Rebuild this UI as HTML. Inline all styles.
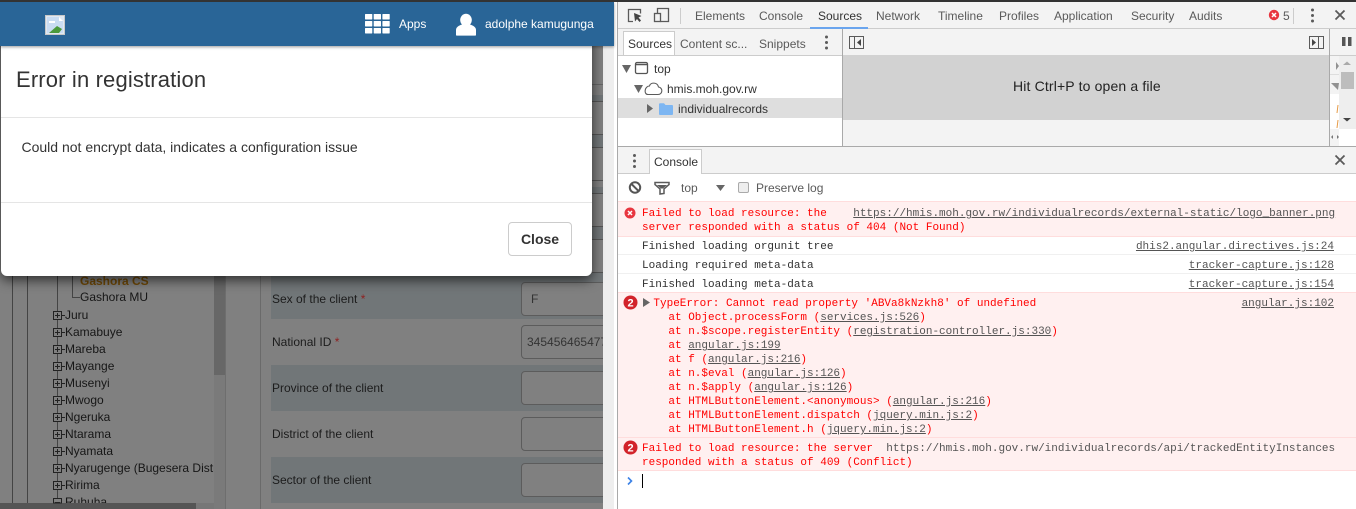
<!DOCTYPE html>
<html><head><meta charset="utf-8"><title>Error in registration</title>
<style>
html,body{margin:0;padding:0;width:1356px;height:509px;overflow:hidden;background:#fff}
body{position:relative;font-family:"Liberation Sans",sans-serif;font-size:12px}
.b{position:absolute}
.t{position:absolute;white-space:pre;line-height:14px;font-size:12px}
.tab{color:#5a5a5a}
.tr{color:#161616;line-height:14px}
.lb{color:#1c1c1c;font-size:12px}
.inp{position:absolute;left:521px;width:90px;background:#808080;border:1px solid #5c5c5c;border-radius:4px;box-sizing:border-box}
.m{position:absolute;white-space:pre;font-family:"Liberation Mono",monospace;font-size:11px;line-height:14px;left:642px}
.r{color:#f00}.g{color:#303030}
.m u,.lk{color:#545454;text-decoration:underline}
.lk{position:absolute;right:22px;font-family:"Liberation Mono",monospace;font-size:11px;line-height:14px;white-space:pre}
</style></head><body>
<!-- dim page -->
<div class="b" style="left:0;top:0;width:603px;height:509px;background:#808080"></div>
<div class="b" style="left:603px;top:0;width:11px;height:509px;background:#eeeeee"></div>
<div class="b" style="left:271px;top:95px;width:332px;height:6px;background:#717678"></div>
<div class="b" style="left:271px;top:134px;width:332px;height:13px;background:#717678"></div>
<div class="b" style="left:271px;top:187px;width:332px;height:6px;background:#717678"></div>
<div class="b" style="left:271px;top:226px;width:332px;height:13px;background:#717678"></div>
<div class="b" style="left:271px;top:273px;width:332px;height:46px;background:#717678"></div>
<div class="b" style="left:271px;top:365px;width:332px;height:46px;background:#717678"></div>
<div class="b" style="left:271px;top:457px;width:332px;height:46px;background:#717678"></div>
<div class="b" style="left:592px;top:84px;width:11px;height:1px;background:#666"></div>
<div class="b" style="left:592px;top:101px;width:11px;height:1px;background:#555"></div>
<div class="b" style="left:592px;top:134px;width:11px;height:1px;background:#555"></div>
<div class="b" style="left:592px;top:147px;width:11px;height:1px;background:#555"></div>
<div class="b" style="left:592px;top:180px;width:11px;height:1px;background:#555"></div>
<div class="b" style="left:592px;top:193px;width:11px;height:1px;background:#555"></div>
<div class="b" style="left:592px;top:226px;width:11px;height:1px;background:#555"></div>
<div class="b" style="left:592px;top:239px;width:11px;height:1px;background:#555"></div>
<div class="b" style="left:592px;top:272px;width:11px;height:1px;background:#555"></div>
<div class="b" style="left:260px;top:270px;width:1px;height:239px;background:#6a6a6a"></div>
<div class="b" style="left:214px;top:270px;width:11px;height:239px;background:#7a7a7a"></div>
<div class="b" style="left:214px;top:270px;width:11px;height:105px;background:#676767"></div>
<div class="b" style="left:225px;top:270px;width:1px;height:239px;background:#6e6e6e"></div>
<div class="b" style="left:12px;top:270px;width:1px;height:233px;background:#444"></div>
<div class="b" style="left:27px;top:270px;width:1px;height:233px;background:#444"></div>
<div class="b" style="left:57px;top:270px;width:1px;height:233px;background:#444"></div>
<div class="b" style="left:72px;top:270px;width:1px;height:27px;background:#444"></div>
<div class="b" style="left:72px;top:297px;width:8px;height:1px;background:#444"></div>
<div class="t" style="left:80px;top:274px;color:#6f4806;font-weight:bold">Gashora CS</div>
<div class="t tr" style="left:80px;top:290px">Gashora MU</div>
<div class="t tr" style="left:65px;top:308px">Juru</div>
<div class="t tr" style="left:65px;top:325px">Kamabuye</div>
<div class="t tr" style="left:65px;top:342px">Mareba</div>
<div class="t tr" style="left:65px;top:359px">Mayange</div>
<div class="t tr" style="left:65px;top:376px">Musenyi</div>
<div class="t tr" style="left:65px;top:393px">Mwogo</div>
<div class="t tr" style="left:65px;top:410px">Ngeruka</div>
<div class="t tr" style="left:65px;top:427px">Ntarama</div>
<div class="t tr" style="left:65px;top:444px">Nyamata</div>
<div class="t tr" style="left:65px;top:461px;width:149px;overflow:hidden">Nyarugenge (Bugesera District)</div>
<div class="t tr" style="left:65px;top:478px">Ririma</div>
<div class="t tr" style="left:65px;top:495px">Ruhuha</div>
<div class="b" style="left:0;top:503px;width:196px;height:6px;background:#555"></div>
<div class="b" style="left:196px;top:503px;width:18px;height:6px;background:#777"></div>
<div class="t lb" style="left:272px;top:292px">Sex of the client <span style="color:#8f1f1f">*</span></div>
<div class="t lb" style="left:272px;top:335px">National ID <span style="color:#8f1f1f">*</span></div>
<div class="t lb" style="left:272px;top:381px">Province of the client</div>
<div class="t lb" style="left:272px;top:427px">District of the client</div>
<div class="t lb" style="left:272px;top:473px">Sector of the client</div>
<div class="inp" style="top:282px;height:34px"></div>
<div class="inp" style="top:325px;height:34px"></div>
<div class="inp" style="top:371px;height:34px"></div>
<div class="inp" style="top:417px;height:34px"></div>
<div class="inp" style="top:463px;height:34px"></div>
<div class="t" style="left:531px;top:292px;color:#333">F</div>
<div class="t" style="left:527px;top:335px;color:#333">3454564654774</div>
<div class="b" style="left:603px;top:0;width:15px;height:509px;background:linear-gradient(90deg,#eeeeee 0,#eeeeee 11px,#fff 11px,#fff 14px,#a9a9a9 14px)"></div>
<!-- modal -->
<div class="b" style="left:1px;top:30px;width:591px;height:246px;background:#fff;border-radius:6px;box-shadow:0 4px 12px rgba(0,0,0,.65)"></div>
<div class="b" style="left:1px;top:117px;width:591px;height:1px;background:#e5e5e5"></div>
<div class="b" style="left:1px;top:202px;width:591px;height:1px;background:#e5e5e5"></div>
<div class="t" style="left:16px;top:66px;font-size:22px;line-height:28px;color:#333;letter-spacing:.15px">Error in registration</div>
<div class="t" style="left:21.500px;top:139px;font-size:14px;line-height:16px;color:#333">Could not encrypt data, indicates a configuration issue</div>
<div class="b" style="left:508px;top:222px;width:64px;height:34px;box-sizing:border-box;border:1px solid #ccc;border-radius:4px;background:#fff;color:#333;font-weight:bold;font-size:14px;line-height:32px;text-align:center">Close</div>
<!-- header -->
<div class="b" style="left:0;top:2px;width:614px;height:44px;background:#296597;box-shadow:0 1px 3px rgba(0,0,0,.4)"></div>
<div class="t" style="left:399px;top:17px;color:#fff">Apps</div>
<div class="t" style="left:485px;top:17px;color:#fff">adolphe kamugunga</div>
<!-- devtools -->
<div class="b" style="left:617px;top:2px;width:1px;height:507px;background:#a9a9a9"></div>
<div class="b" style="left:618px;top:2px;width:738px;height:26px;background:#f3f3f3"></div>
<div class="b" style="left:618px;top:28px;width:738px;height:1px;background:#ccc"></div>
<div class="b" style="left:810px;top:27px;width:58px;height:2px;background:#6aa5ee"></div>
<div class="b" style="left:618px;top:29px;width:738px;height:26px;background:#f3f3f3"></div>
<div class="b" style="left:618px;top:55px;width:224px;height:1px;background:#ccc"></div>
<div class="b" style="left:623px;top:31px;width:52px;height:24px;box-sizing:border-box;background:#fff;border:1px solid #ccc;border-bottom:0"></div>
<div class="b" style="left:618px;top:56px;width:224px;height:90px;background:#fff"></div>
<div class="b" style="left:618px;top:98px;width:224px;height:20px;background:#dedede"></div>
<div class="b" style="left:842px;top:29px;width:1px;height:117px;background:#a9a9a9"></div>
<div class="b" style="left:843px;top:55px;width:486px;height:65px;background:#d2d2d2"></div>
<div class="b" style="left:843px;top:120px;width:486px;height:26px;background:#f3f3f3"></div>
<div class="b" style="left:1329px;top:29px;width:1px;height:117px;background:#a9a9a9"></div>
<div class="b" style="left:1330px;top:55px;width:26px;height:1px;background:#ccc"></div>
<div class="b" style="left:1330px;top:56px;width:9px;height:38px;background:#f3f3f3"></div>
<div class="b" style="left:1330px;top:74px;width:9px;height:1px;background:#ddd"></div>
<div class="b" style="left:1330px;top:129px;width:9px;height:17px;background:#f3f3f3"></div>
<div class="b" style="left:1339px;top:56px;width:17px;height:73px;background:#eeeeee"></div>
<div class="b" style="left:1341px;top:72px;width:13px;height:17px;background:#bdbdbd"></div>
<div class="b" style="left:618px;top:146px;width:738px;height:1px;background:#a9a9a9"></div>
<div class="b" style="left:618px;top:147px;width:738px;height:26px;background:#f3f3f3"></div>
<div class="b" style="left:618px;top:173px;width:738px;height:1px;background:#ccc"></div>
<div class="b" style="left:649px;top:149px;width:53px;height:25px;box-sizing:border-box;background:#fff;border:1px solid #ccc;border-bottom:0"></div>
<!-- console rows -->
<div class="b" style="left:618px;top:201px;width:738px;height:1px;background:#fdd"></div>
<div class="b" style="left:618px;top:202px;width:738px;height:34px;background:#fff0f0"></div>
<div class="b" style="left:618px;top:236px;width:738px;height:1px;background:#fdd"></div>
<div class="b" style="left:618px;top:254px;width:738px;height:1px;background:#f0f0f0"></div>
<div class="b" style="left:618px;top:273px;width:738px;height:1px;background:#f0f0f0"></div>
<div class="b" style="left:618px;top:292px;width:738px;height:1px;background:#fdd"></div>
<div class="b" style="left:618px;top:293px;width:738px;height:144px;background:#fff0f0"></div>
<div class="b" style="left:618px;top:437px;width:738px;height:1px;background:#fdd"></div>
<div class="b" style="left:618px;top:438px;width:738px;height:32px;background:#fff0f0"></div>
<div class="b" style="left:618px;top:470px;width:738px;height:1px;background:#fdd"></div>
<!-- devtools text -->
<div class="t tab" style="left:695px;top:9px">Elements</div>
<div class="t tab" style="left:759px;top:9px">Console</div>
<div class="t" style="left:818px;top:9px;color:#333">Sources</div>
<div class="t tab" style="left:876px;top:9px">Network</div>
<div class="t tab" style="left:938px;top:9px">Timeline</div>
<div class="t tab" style="left:999px;top:9px">Profiles</div>
<div class="t tab" style="left:1054px;top:9px">Application</div>
<div class="t tab" style="left:1131px;top:9px">Security</div>
<div class="t tab" style="left:1189px;top:9px">Audits</div>
<div class="t tab" style="left:1283px;top:9px">5</div>
<div class="t" style="left:628px;top:37px;color:#333">Sources</div>
<div class="t tab" style="left:680px;top:37px">Content sc...</div>
<div class="t tab" style="left:759px;top:37px">Snippets</div>
<div class="t" style="left:654px;top:62px;color:#333">top</div>
<div class="t" style="left:667px;top:82px;color:#333">hmis.moh.gov.rw</div>
<div class="t" style="left:678px;top:102px;color:#333">individualrecords</div>
<div class="t" style="left:1013px;top:79px;font-size:14px;line-height:15px;color:#222;letter-spacing:.15px">Hit Ctrl+P to open a file</div>
<div class="t" style="left:654px;top:155px;color:#333">Console</div>
<div class="t tab" style="left:681px;top:181px">top</div>
<div class="t tab" style="left:756px;top:181px">Preserve log</div>
<div class="m r" style="top:207px">Failed to load resource: the    <u>https://hmis.moh.gov.rw/individualrecords/external-static/logo_banner.png</u>
server responded with a status of 404 (Not Found)</div>
<div class="m g" style="top:240px">Finished loading orgunit tree</div>
<div class="lk" style="top:240px">dhis2.angular.directives.js:24</div>
<div class="m g" style="top:259px">Loading required meta-data</div>
<div class="lk" style="top:259px">tracker-capture.js:128</div>
<div class="m g" style="top:278px">Finished loading meta-data</div>
<div class="lk" style="top:278px">tracker-capture.js:154</div>
<div class="m r" style="top:297px;left:653.4px">TypeError: Cannot read property 'ABVa8kNzkh8' of undefined</div>
<div class="lk" style="top:297px">angular.js:102</div>
<div class="m r" style="top:311px;left:668.4px">at Object.processForm (<u>services.js:526</u>)
at n.$scope.registerEntity (<u>registration-controller.js:330</u>)
at <u>angular.js:199</u>
at f (<u>angular.js:216</u>)
at n.$eval (<u>angular.js:126</u>)
at n.$apply (<u>angular.js:126</u>)
at HTMLButtonElement.&lt;anonymous&gt; (<u>angular.js:216</u>)
at HTMLButtonElement.dispatch (<u>jquery.min.js:2</u>)
at HTMLButtonElement.h (<u>jquery.min.js:2</u>)</div>
<div class="m r" style="top:442px">Failed to load resource: the server  <span style="color:#545454">https://hmis.moh.gov.rw/individualrecords/api/trackedEntityInstances</span>
responded with a status of 409 (Conflict)</div>
<div class="b" style="left:642px;top:474px;width:1px;height:14px;background:#000"></div>
<!-- icons -->
<svg class="b" style="left:0;top:0" width="1356" height="509" viewBox="0 0 1356 509">
<rect x="0" y="0" width="1356" height="2" fill="#333"/>
<!-- broken image -->
<rect x="45.500" y="15.500" width="19" height="19" fill="#dfe8f2" stroke="#c8c8c8"/>
<path d="M47 17h12l4 4v12H47z" fill="#c9dcf2"/><path d="M49 33l8-7 5 3-3 4z" fill="#4b9a3c"/><path d="M59 17l4 4h-4z" fill="#fff"/><path d="M49 21h6v2h-6z" fill="#fff"/>
<!-- apps -->
<g fill="#fff"><rect x="365" y="14" width="7.300" height="5.500" rx=".6"/><rect x="373.700" y="14" width="7.300" height="5.500" rx=".6"/><rect x="382.400" y="14" width="7.300" height="5.500" rx=".6"/><rect x="365" y="21" width="7.300" height="5.500" rx=".6"/><rect x="373.700" y="21" width="7.300" height="5.500" rx=".6"/><rect x="382.400" y="21" width="7.300" height="5.500" rx=".6"/><rect x="365" y="28" width="7.300" height="5.500" rx=".6"/><rect x="373.700" y="28" width="7.300" height="5.500" rx=".6"/><rect x="382.400" y="28" width="7.300" height="5.500" rx=".6"/>
<ellipse cx="466" cy="20" rx="5.800" ry="6.200"/><path d="M456 35v-5c0-3 3-4.500 6-5.500h8c3 1 6 2.500 6 5.500v5c0 .5-.5 .6-1 .6h-18c-.5 0-1-.1-1-.6z"/></g>
<!-- tree plus boxes -->
<g fill="#808080" stroke="#222" stroke-width="1">
<rect x="53.500" y="311.500" width="8" height="8"/><rect x="53.500" y="328.500" width="8" height="8"/><rect x="53.500" y="345.500" width="8" height="8"/><rect x="53.500" y="362.500" width="8" height="8"/><rect x="53.500" y="379.500" width="8" height="8"/><rect x="53.500" y="396.500" width="8" height="8"/><rect x="53.500" y="413.500" width="8" height="8"/><rect x="53.500" y="430.500" width="8" height="8"/><rect x="53.500" y="447.500" width="8" height="8"/><rect x="53.500" y="464.500" width="8" height="8"/><rect x="53.500" y="481.500" width="8" height="8"/><rect x="53.500" y="498.500" width="8" height="4.500"/></g>
<path stroke="#222" fill="none" d="M55 315.500h5M57.500 313v5M62 315.500h3M55 332.500h5M57.500 330v5M62 332.500h3M55 349.500h5M57.500 347v5M62 349.500h3M55 366.500h5M57.500 364v5M62 366.500h3M55 383.500h5M57.500 381v5M62 383.500h3M55 400.500h5M57.500 398v5M62 400.500h3M55 417.500h5M57.500 415v5M62 417.500h3M55 434.500h5M57.500 432v5M62 434.500h3M55 451.500h5M57.500 449v5M62 451.500h3M55 468.500h5M57.500 466v5M62 468.500h3M55 485.500h5M57.500 483v5M62 485.500h3M55 502.500h5"/>
<!-- toolbar -->
<path d="M633 21.500h-4.500v-12h12v4" fill="none" stroke="#5a5a5a" stroke-width="1.300"/><path d="M634 13l7.500 3-3 1.500 2.500 3-1.500 1.500-2.500-3-2 2.500z" fill="#444"/>
<rect x="654.500" y="13.500" width="6" height="8" fill="none" stroke="#5a5a5a" stroke-width="1.300"/><path d="M657.500 13V8.500h11v13h-8" fill="none" stroke="#5a5a5a" stroke-width="1.300"/>
<path d="M680.500 8v16M1293.500 8v16" stroke="#ccc"/>
<circle cx="1274" cy="15" r="5.200" fill="#e8353f"/><path d="M1272 13l4 4M1276 13l-4 4" stroke="#fff" stroke-width="1.500"/>
<g fill="#5a5a5a"><circle cx="1312.500" cy="10" r="1.500"/><circle cx="1312.500" cy="15.500" r="1.500"/><circle cx="1312.500" cy="21" r="1.500"/><circle cx="826.500" cy="37" r="1.500"/><circle cx="826.500" cy="42.500" r="1.500"/><circle cx="826.500" cy="48" r="1.500"/><circle cx="634.500" cy="155.500" r="1.500"/><circle cx="634.500" cy="161" r="1.500"/><circle cx="634.500" cy="166.500" r="1.500"/></g>
<path d="M1335.500 10.500l9 9M1344.500 10.500l-9 9M1335.500 155.500l9 9M1344.500 155.500l-9 9" stroke="#5a5a5a" stroke-width="1.800" fill="none"/>
<!-- panel toggles -->
<path d="M849.500 36.500h14v12h-14zM854.500 36.500v12" fill="none" stroke="#5a5a5a"/><path d="M861 39v7l-4-3.500z" fill="#444"/>
<path d="M1309.500 36.500h14v12h-14zM1318.500 36.500v12" fill="none" stroke="#5a5a5a"/><path d="M1312 39v7l4-3.500z" fill="#444"/>
<path d="M1342 37h3.500v9h-3.500zM1348 37h3.500v9h-3.500z" fill="#555"/>
<path d="M1343 65l4-3.500 4 3.500z" fill="#aaa"/><path d="M1343 118l4 3.500 4-3.500z" fill="#444"/>
<path d="M1336 62v8l3-4zM1331 83h8l-1 7z" fill="#666" opacity=".7"/>
<path d="M1333 135v4l-2-2zM1337 135v4l2-2z" fill="#777"/>
<path d="M1338 105l-1 8M1338 120l-1 8" stroke="#e69a45" stroke-width="1"/>
<!-- nav tree -->
<path d="M622 65h9l-4.500 8z" fill="#666"/><rect x="635.500" y="62.500" width="12" height="11" rx="1.500" fill="none" stroke="#555" stroke-width="1.300"/><path d="M636 64.500h11" stroke="#555" stroke-width="1.500"/>
<path d="M634 85h9l-4.500 8z" fill="#666"/>
<path d="M648 94.500h10c5 0 5-7 .5-7.500-1-5-8-5-9-1-5 0-6 8.500-1.500 8.500z" fill="none" stroke="#5a5a5a" stroke-width="1.100"/>
<path d="M647 104v9l6-4.500z" fill="#666"/>
<path d="M659 104.500c0-.8.5-1.200 1-1.200h4l1.500 1.700h6.500c.6 0 1 .4 1 1v8c0 .6-.4 1-1 1h-12c-.6 0-1-.4-1-1z" fill="#7db6f2"/>
<!-- filter bar -->
<circle cx="635" cy="187.500" r="5.200" fill="none" stroke="#555" stroke-width="2"/><path d="M631.500 184l7 7" stroke="#555" stroke-width="2"/>
<path d="M655 182.500h14v2l-5 4.500v4.500l-4 .5v-5l-5-4.500z" fill="none" stroke="#5a5a5a" stroke-width="1.500"/><path d="M657 185h10l-4 3.500h-2z" fill="#5a5a5a"/>
<path d="M716 185h9l-4.500 6z" fill="#666"/>
<rect x="738.500" y="182.500" width="10" height="10" rx="1.500" fill="#eee" stroke="#aaa"/>
<!-- error icons -->
<circle cx="630" cy="213" r="5.500" fill="#e8353f"/><path d="M628 211l4 4M632 211l-4 4" stroke="#fff" stroke-width="1.500"/>
<circle cx="630.500" cy="302.500" r="7" fill="#d2232a"/><circle cx="630.500" cy="447.500" r="7" fill="#d2232a"/>
<text x="630.500" y="306.500" text-anchor="middle" font-family="Liberation Sans" font-weight="bold" font-size="11" fill="#fff">2</text>
<text x="630.500" y="451.500" text-anchor="middle" font-family="Liberation Sans" font-weight="bold" font-size="11" fill="#fff">2</text>
<path d="M643 298v9l7-4.500z" fill="#666"/>
<path d="M628 477.500l3.500 3.500-3.500 3.500" fill="none" stroke="#3b82e6" stroke-width="1.600"/>
</svg>
</body></html>
